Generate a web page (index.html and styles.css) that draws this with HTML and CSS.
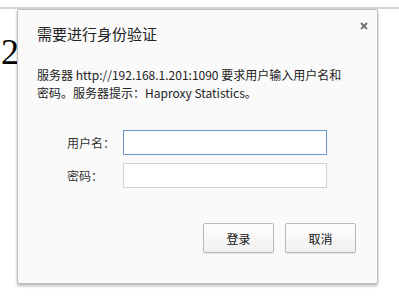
FILE: index.html
```html
<!DOCTYPE html>
<html lang="zh-CN">
<head>
    <meta charset="UTF-8">
    <title>需要进行身份验证</title>
    <link rel="stylesheet" href="styles.css">
</head>
<body>
    <div class="toolbar"></div>
    <div class="page-text">92</div>

    <div class="auth-dialog">
        <button class="close-btn" title="关闭">
            <svg width="8" height="8" viewBox="0 0 8 8">
                <path d="M1 1 L7 7 M7 1 L1 7" stroke="#6f6f6f" stroke-width="1.8" fill="none"/>
            </svg>
        </button>
        <h2 class="dialog-title">需要进行身份验证</h2>
        <p class="dialog-msg">服务器 http://192.168.1.201:1090 要求用户输入用户名和<br>密码。服务器提示：Haproxy Statistics。</p>

        <form class="auth-form">
            <div class="form-row">
                <label for="username">用户名：</label>
                <input type="text" id="username" class="focused">
            </div>
            <div class="form-row">
                <label for="password">密码：</label>
                <input type="password" id="password">
            </div>
            <div class="actions">
                <button type="button" class="btn">登录</button>
                <button type="button" class="btn">取消</button>
            </div>
        </form>
    </div>
</body>
</html>
```

FILE: styles.css
```css
body {
    margin: 0;
    padding: 0;
    background: #fff;
    overflow: hidden;
}

.toolbar {
    height: 7px;
    border-bottom: 2px solid #d4d4d4;
}

.page-text {
    font-family: "Liberation Serif", serif;
    font-size: 36px;
    margin: 22px 0 0 -17px;
    color: #000;
}

.auth-dialog {
    position: absolute;
    left: 17px;
    top: 9px;
    width: 361px;
    height: 275px;
    box-sizing: border-box;
    padding: 14px 20px 0 19px;
    background: #fafafa;
    border: 1px solid #bdbdbd;
    border-radius: 2px;
    box-shadow: 0 2px 3px rgba(0, 0, 0, 0.28);
    font-family: "Noto Sans CJK SC", "Noto Sans", sans-serif;
    color: #222;
}

.close-btn {
    position: absolute;
    top: 12px;
    right: 9px;
    width: 8px;
    height: 8px;
    padding: 0;
    border: none;
    background: none;
    display: flex;
}

.dialog-title {
    font-size: 15px;
    font-weight: normal;
    line-height: 20px;
    margin: 0;
}

.dialog-msg {
    font-size: 12px;
    line-height: 18px;
    margin: 22px 0 0;
}

.auth-form {
    margin-top: 28px;
    padding-left: 30px;
}

.form-row {
    display: flex;
    align-items: center;
    margin-bottom: 8px;
}

.form-row label {
    width: 56px;
    font-size: 12px;
    color: #333;
}

.form-row input {
    width: 204px;
    height: 25px;
    box-sizing: border-box;
    border: 1px solid #d3d3d3;
    background: #fff;
    outline: none;
    padding: 0 4px;
}

.form-row input.focused {
    border-color: #6a98cc;
}

.actions {
    display: flex;
    justify-content: flex-end;
    gap: 11px;
    margin-top: 35px;
    margin-right: 1px;
}

.btn {
    width: 71px;
    height: 30px;
    box-sizing: border-box;
    border: 1px solid #b9b9b9;
    border-radius: 2px;
    background: linear-gradient(#fdfdfd, #f1f1f1);
    box-shadow: 0 1px 1px rgba(0, 0, 0, 0.08);
    font-family: "Noto Sans CJK SC", sans-serif;
    font-size: 12px;
    color: #111;
    padding: 0;
}
```
